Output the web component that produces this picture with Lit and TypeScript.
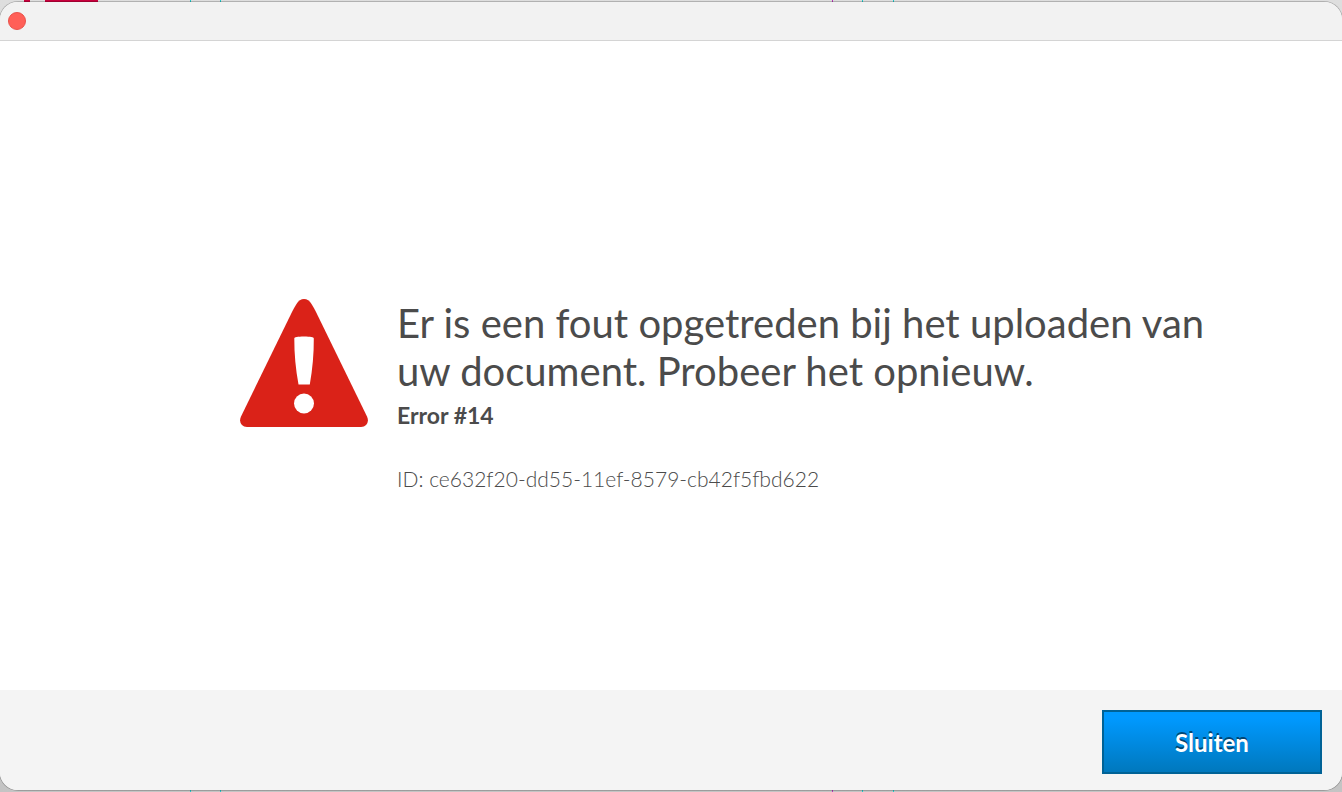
import { LitElement, html, css } from "lit";
import { customElement, property } from "lit/decorators.js";

@customElement("warning-icon")
export class WarningIcon extends LitElement {
  static styles = css`
    :host {
      display: block;
      flex: none;
      width: 128px;
      height: 128px;
    }
    .icon {
      display: block;
      width: 100%;
      height: 100%;
    }
  `;

  render() {
    return html`
      <svg class="icon" viewBox="0 0 128 128" aria-hidden="true">
        <path
          fill="#da2218"
          d="M56.500 5C58.500 1.800 61 0 64 0C67 0 69.500 1.800 71.500 5C73 7.500 74.500 10 76 13L127 117.500C129.500 123 126.500 128 121 128H7C1.500 128 -1.500 123 1 117.500L52 13C53.500 10 55 7.500 56.500 5Z"
        />
        <path
          fill="#fff"
          d="M54.300 39.500C54.300 38.300 57.500 37.600 64 37.600S73.800 38.300 73.800 39.500C73.900 55 72.500 70 69.800 85.600H58.500C55.700 70 54.200 55 54.300 39.500Z"
        />
        <circle fill="#fff" cx="64" cy="104.500" r="10" />
      </svg>
    `;
  }
}

@customElement("app-root")
export class AppRoot extends LitElement {
  @property() errorCode = "Error #14";
  @property() requestId = "ce632f20-dd55-11ef-8579-cb42f5fbd622";

  static styles = css`
    :host {
      display: flex;
      flex-direction: column;
      box-sizing: border-box;
      min-height: 100vh;
      padding: 2px 0;
      font-family: Lato, "Open Sans", sans-serif;
      color: #4b4b4b;
      background:
        linear-gradient(#c8003c, #c8003c) 24px 0 / 6px 2px no-repeat,
        linear-gradient(#c8003c, #c8003c) 45px 0 / 53px 2px no-repeat,
        linear-gradient(#20c8c8, #20c8c8) 190px 0 / 1px 100% no-repeat,
        linear-gradient(#20c8c8, #20c8c8) 220px 0 / 1px 100% no-repeat,
        linear-gradient(#b838b8, #b838b8) 832px 0 / 1px 100% no-repeat,
        linear-gradient(#20c8c8, #20c8c8) 862px 0 / 1px 100% no-repeat,
        linear-gradient(#20c8c8, #20c8c8) 893px 0 / 1px 100% no-repeat,
        linear-gradient(#dedede, #c4c4c4);
    }
    .window {
      flex: 1;
      display: flex;
      flex-direction: column;
      overflow: hidden;
      border-radius: 18px;
      background: #fff;
      box-shadow: 0 0 0 1px rgba(0, 0, 0, 0.2);
    }
    .titlebar {
      display: flex;
      align-items: center;
      box-sizing: border-box;
      height: 39px;
      padding: 0 8px;
      background: #f2f2f2;
      border-bottom: 1px solid #d4d4d4;
    }
    .close {
      width: 18px;
      height: 18px;
      padding: 0;
      border: 1px solid #e8514a;
      border-radius: 50%;
      background: #ff5f57;
    }
    .content {
      flex: 1;
      display: flex;
      align-items: flex-start;
      gap: 29px;
      padding: 258px 100px 0 240px;
    }
    .message {
      flex: 1;
    }
    .title,
    .detail {
      margin: 0;
      font-weight: 400;
    }
    .title {
      font-size: 40px;
      line-height: 48px;
    }
    .detail {
      line-height: 32px;
    }
    .code {
      padding: 4px 0 32px;
      font-size: 23px;
      font-weight: 700;
    }
    .id {
      font-size: 21px;
      font-weight: 300;
    }
    .footer {
      display: flex;
      justify-content: flex-end;
      padding: 20px 20px 16px;
      background: #f4f4f4;
    }
    .action {
      width: 220px;
      height: 64px;
      padding: 2px 0 0;
      border: 2px solid #006296;
      background: linear-gradient(#0099ff 10%, #0078bd);
      color: #fff;
      font: 700 24px/32px Lato, "Open Sans", sans-serif;
      text-shadow: 0 -2px 0 rgba(0, 0, 0, 0.5);
    }
  `;

  render() {
    return html`
      <div class="window" role="alertdialog" aria-labelledby="title">
        <header class="titlebar">
          <button class="close" type="button" aria-label="Sluiten"></button>
        </header>
        <main class="content">
          <warning-icon></warning-icon>
          <div class="message">
            <h1 class="title" id="title">
              Er is een fout opgetreden bij het uploaden van uw document. Probeer het opnieuw.
            </h1>
            <p class="detail code">${this.errorCode}</p>
            <p class="detail id">ID: ${this.requestId}</p>
          </div>
        </main>
        <footer class="footer">
          <button class="action" type="button">Sluiten</button>
        </footer>
      </div>
    `;
  }
}
